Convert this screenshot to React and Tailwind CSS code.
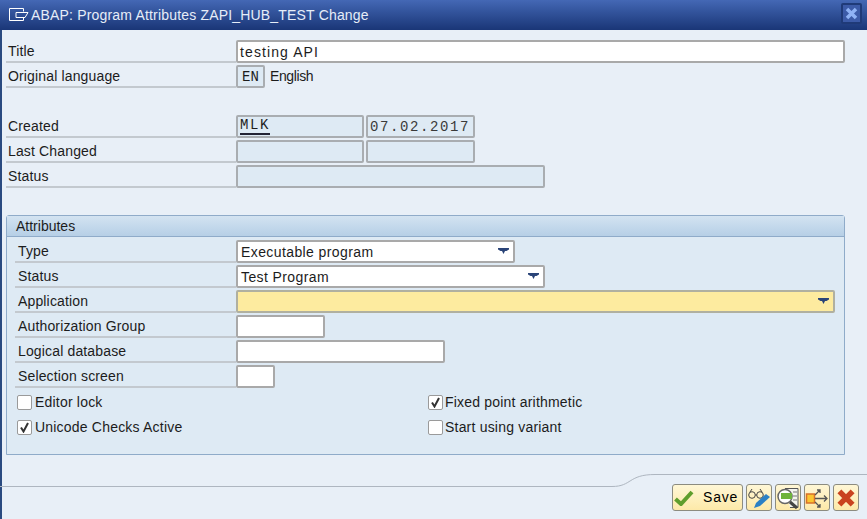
import React from 'react';

const sans = { fontFamily: '"Liberation Sans", sans-serif' };

const Field = ({ className = '', children, mono, readOnly }) => (
  <div
    className={`h-[23px] shrink-0 flex items-center rounded-[2px] border-2 px-[2px] text-[14px] leading-none text-[#1c1c1c] ${
      readOnly ? 'border-[#a9adb1] bg-[#deeaf4]' : 'border-[#a9a9a9] bg-white'
    } ${mono ? "font-['Liberation_Mono',monospace] tracking-[1.6px]" : 'tracking-[0.4px]'} ${className}`}
  >
    {children}
  </div>
);

const Arrow = () => (
  <svg width="11" height="6" viewBox="0 0 11 6" className="ml-auto mr-[1px] mt-[-2px]">
    <path d="M0 0h11v1.500L8.500 3H7L5.500 6 4 3H2.500L0 1.500z" fill="#2a4478" />
  </svg>
);

const Row = ({ label, labelWidth = 'w-[230px]', children }) => (
  <div className="flex h-[25px]">
    <div
      className={`${labelWidth} h-[23px] shrink-0 border-b-2 border-[#c3c9cf] pl-[2px] pr-1 pt-[2px] flex items-center text-[14px] tracking-[0.15px] text-[#1c1c1c]`}
    >
      {label}
    </div>
    {children}
  </div>
);

const Check = ({ checked, label, labelClass = 'ml-[2px]' }) => (
  <div className="flex items-center h-[25px]">
    <div className="w-[15px] h-[15px] shrink-0 rounded-[2px] border border-[#9a9a9a] bg-white flex items-center justify-center">
      {checked && (
        <svg width="11" height="11" viewBox="0 0 11 11">
          <path d="M2 5.500 L4.500 9.500 L9 1" fill="none" stroke="#333" strokeWidth="2" />
        </svg>
      )}
    </div>
    <span className={`${labelClass} text-[14px] tracking-[0.2px] text-[#1c1c1c]`}>{label}</span>
  </div>
);

const ToolButton = ({ children, className = 'w-[26px]' }) => (
  <button className={`${className} h-[27px] flex items-center justify-center rounded-[3px] border border-[#8c8c80] bg-gradient-to-b from-[#fff7d6] to-[#fde9a8] text-[14px] text-black`}>
    {children}
  </button>
);

export default function App() {
  const attrRows = [
    ['Application', <Field className="w-[599px] !px-[3px] !border-[#b0b0a0] !bg-[#fdeb9f]"><Arrow /></Field>],
    ['Authorization Group', <Field className="w-[89px]" />],
    ['Logical database', <Field className="w-[209px]" />],
    ['Selection screen', <Field className="w-[39px]" />],
  ];

  return (
    <div style={sans} className="w-[867px] h-[519px] flex flex-col overflow-hidden bg-[#e8eff7]">
      {/* title bar */}
      <div className="h-[30px] shrink-0 flex items-center bg-gradient-to-b from-[#4468b5] to-[#1a3677] pl-[9px] pr-[5px]">
        <svg width="20" height="14" viewBox="0 0 20 14" className="mt-[-1px]">
          <path d="M.5.500h14v3M.5.500v12h14v-3M7 4.500h12l-3 5H7z" fill="none" stroke="#fff" />
        </svg>
        <span className="ml-[2px] text-[14px] tracking-[0.18px] text-[#e6edf8]">
          ABAP: Program Attributes ZAPI_HUB_TEST Change
        </span>
        <div className="ml-auto w-[21px] h-[21px] mb-[4px] rounded-[2px] border-2 border-[#1f3a78] bg-[#3c5ba8] flex items-center justify-center">
          <svg width="13" height="13" viewBox="0 0 13 13">
            <path d="M2 2l9 9M11 2l-9 9" stroke="#8fb2f5" strokeWidth="3.500" />
          </svg>
        </div>
      </div>

      <div className="flex-1 flex flex-col border-l-2 border-[#2a4a80] pl-[4px] pr-[22px] pt-[10px]">
        <Row label="Title"><Field className="w-[609px] !tracking-[1.1px]">testing API</Field></Row>
        <Row label="Original language">
          <Field readOnly mono className="w-[29px] justify-center !px-0 !tracking-normal">EN</Field>
          <span className="ml-[5px] h-[23px] flex items-center text-[14px] tracking-[-0.4px] text-[#1c1c1c]">English</span>
        </Row>
        <div className="h-[25px]" />
        <Row label="Created">
          <Field readOnly mono className="w-[128px]"><span className="border-b-2 border-[#223] leading-[15px]">MLK</span></Field>
          <Field readOnly mono className="w-[109px] ml-[2px] !text-[#3a3a3a]">07.02.2017</Field>
        </Row>
        <Row label="Last Changed">
          <Field readOnly className="w-[128px]" />
          <Field readOnly className="w-[109px] ml-[2px]" />
        </Row>
        <Row label="Status"><Field readOnly className="w-[309px]" /></Row>

        {/* attributes group */}
        <div className="mt-[25px] w-[839px] h-[240px] rounded-t-[3px] border border-[#8fabc9] bg-[#deeaf4]">
          <div className="h-[21px] border-b border-[#8fabc9] bg-gradient-to-b from-[#d3e3f1] to-[#b6cfe6] pl-[9px] flex items-center text-[14px] text-[#1c1c1c]">
            Attributes
          </div>
          <div className="pl-[8px] pt-[3px]">
            <Row label="Type" labelWidth="w-[221px] !pl-[3px]">
              <Field className="w-[279px] !px-[3px]">Executable program<Arrow /></Field>
            </Row>
            <Row label="Status" labelWidth="w-[221px] !pl-[3px]">
              <Field className="w-[309px] !px-[3px]">Test Program<Arrow /></Field>
            </Row>
            {attrRows.map(([label, field]) => (
              <Row key={label} label={label} labelWidth="w-[221px] !pl-[3px]">{field}</Row>
            ))}
            <div className="grid grid-cols-[411px_1fr] pl-[2px]">
              <Check label="Editor lock" labelClass="ml-[3px]" />
              <Check checked label="Fixed point arithmetic" />
              <Check checked label="Unicode Checks Active" labelClass="ml-[3px]" />
              <Check label="Start using variant" />
            </div>
          </div>
        </div>
      </div>

      {/* footer */}
      <div className="relative h-[45px] shrink-0 border-l-2 border-[#2a4a80]">
        <svg width="867" height="16" viewBox="0 0 867 16" className="absolute left-[-2px] top-0">
          <path d="M0 12.500H612C632 12.500 628 .500 655 .500H867" fill="none" stroke="#aeb6c0" />
        </svg>
        <div className="absolute right-[8px] top-[10px] flex gap-[3px]">
          <ToolButton className="w-[71px] !justify-start pl-[1px]">
            <svg width="20" height="16" viewBox="0 0 20 16">
              <path d="M1.500 9 L7 14 L18 2" fill="none" stroke="#5f9e2c" strokeWidth="4" />
            </svg>
            <span className="ml-[9px] tracking-[0.8px]">Save</span>
          </ToolButton>
          <ToolButton>
            <svg width="24" height="24" viewBox="0 0 24 24">
              <circle cx="5" cy="9" r="3.300" fill="none" stroke="#444" />
              <circle cx="13" cy="9" r="3.300" fill="none" stroke="#444" />
              <path d="M8.300 9h1.400M3 6l2-3M15 6l-2-3" stroke="#444" />
              <path d="M7 22l2-5 10-9 4 3-10 9z" fill="#2b80c5" />
            </svg>
          </ToolButton>
          <ToolButton>
            <svg width="24" height="24" viewBox="0 0 24 24">
              <path d="M9 2.500h13v19H14" fill="#f4f4ee" stroke="#555" />
              <path d="M17 6h4M17 10h4M17 14h4" stroke="#777" />
              <circle cx="9" cy="10.500" r="7" fill="#fff" stroke="#666" strokeWidth="1.500" />
              <rect x="5" y="7" width="11" height="6" fill="#6fb33c" />
              <path d="M14 16l7 6" stroke="#444" strokeWidth="3" />
            </svg>
          </ToolButton>
          <ToolButton>
            <svg width="24" height="24" viewBox="0 0 24 24">
              <rect x="1.500" y="8" width="8" height="9" fill="#fbc531" stroke="#d8702a" strokeWidth="1.500" />
              <path d="M10 12.500h12M19 9.500l3 3-3 3M10 9l5-5M12 4h3v3M10 16l5 5M12 21h3v-3" fill="none" stroke="#555" strokeWidth="1.300" />
            </svg>
          </ToolButton>
          <ToolButton>
            <svg width="22" height="22" viewBox="0 0 20 20">
              <path d="M4 4l12 12M16 4L4 16" stroke="#c9431f" strokeWidth="5" />
            </svg>
          </ToolButton>
        </div>
      </div>
    </div>
  );
}
